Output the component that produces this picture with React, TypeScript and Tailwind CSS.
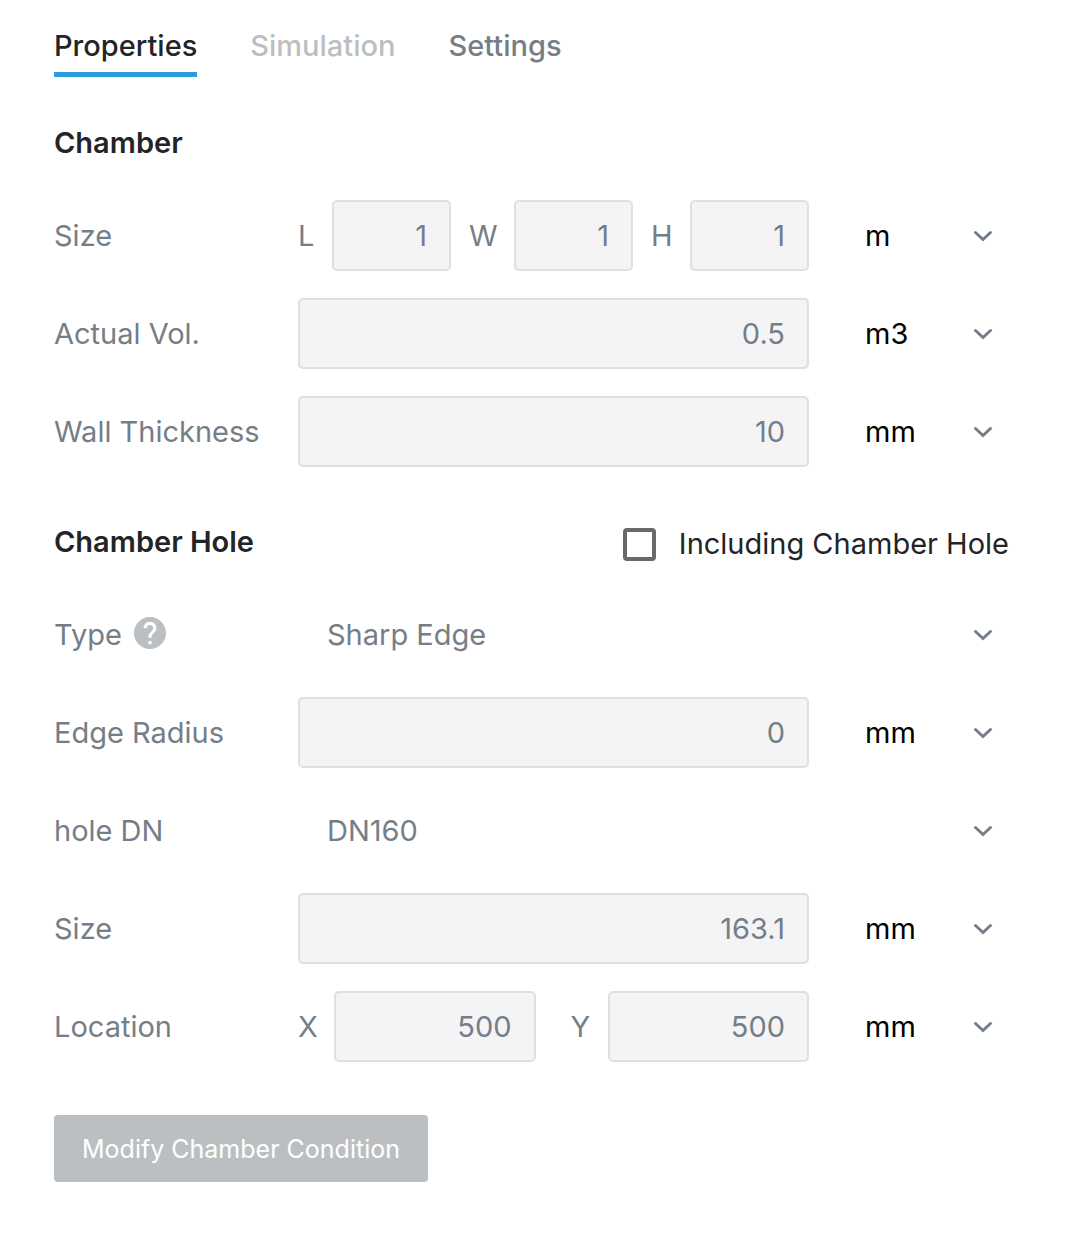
import type { ReactNode } from "react";

const muted = "text-[#757e87]";

function Chevron() {
  return (
    <svg
      className="pointer-events-none absolute right-4 top-1/2 -translate-y-1/2"
      width="20"
      height="12"
      viewBox="0 0 20 12"
      fill="none"
    >
      <path d="M2.5 2.5L10 9.5L17.5 2.5" stroke="#757e87" strokeWidth="3" strokeLinecap="round" />
    </svg>
  );
}

type SelectProps = { label: string; options: string[]; className: string };

function Select({ label, options, className }: SelectProps) {
  return (
    <div className="relative h-full">
      <select
        aria-label={label}
        className={`h-full w-full appearance-none bg-transparent outline-none ${className}`}
      >
        {options.map((option) => (
          <option key={option}>{option}</option>
        ))}
      </select>
      <Chevron />
    </div>
  );
}

function NumberBox({ id, label, value }: { id?: string; label?: string; value: string }) {
  return (
    <input
      id={id}
      aria-label={label}
      disabled
      defaultValue={value}
      className={`h-[71px] w-full min-w-0 rounded-[5px] border-2 border-[#dfdfe0] bg-[#f4f4f7] pr-[22px] text-right ${muted}`}
    />
  );
}

function Axis({ name, value, className = "" }: { name: string; value: string; className?: string }) {
  const id = `axis-${name}`;
  return (
    <>
      <label htmlFor={id} className={className}>
        {name}
      </label>
      <NumberBox id={id} value={value} />
    </>
  );
}

type RowProps = { label: ReactNode; unit: string; units: string[]; children: ReactNode };

function Row({ label, unit, units, children }: RowProps) {
  return (
    <div className={`grid h-[71px] grid-cols-[244px_1fr_200px] items-center ${muted}`}>
      <div>{label}</div>
      <div>{children}</div>
      <Select label={unit} options={units} className="pl-14 text-black" />
    </div>
  );
}

function SelectRow({ label, name, options }: { label: ReactNode; name: string; options: string[] }) {
  return (
    <div className={`grid h-[71px] grid-cols-[244px_1fr] items-center ${muted}`}>
      <div className="flex items-center gap-3">{label}</div>
      <Select label={name} options={options} className="pl-[29px]" />
    </div>
  );
}

function HelpIcon() {
  return (
    <svg className="mb-1" width="32" height="32" viewBox="2 2 20 20" fill="#bbbfc2">
      <path d="M12 2C6.48 2 2 6.48 2 12s4.48 10 10 10 10-4.48 10-10S17.52 2 12 2zm1 17h-2v-2h2v2zm2.07-7.75l-.9.92C13.45 12.9 13 13.5 13 15h-2v-.5c0-1.1.45-2.1 1.17-2.83l1.24-1.26c.37-.36.59-.86.59-1.41 0-1.1-.9-2-2-2s-2 .9-2 2H8c0-2.21 1.79-4 4-4s4 1.79 4 4c0 .88-.36 1.68-.93 2.25z" />
    </svg>
  );
}

export default function App() {
  return (
    <main className="bg-white pb-[53px] pl-[54px] pr-[58px] pt-6 font-['Inter',sans-serif] text-[29px] leading-[44px] text-[#222426]">
      <nav className="flex items-start gap-[53px] font-medium">
        <button className="border-b-[5px] border-[#2d9cdb] pb-1">Properties</button>
        <button disabled className="pb-1 text-[#bbbfc2]">
          Simulation
        </button>
        <button className={`pb-1 ${muted}`}>Settings</button>
      </nav>

      <section className="mt-11">
        <h2 className="font-semibold">Chamber</h2>
        <div className="mt-[35px] flex flex-col gap-[27px]">
          <Row label="Size" unit="Size unit" units={["m", "mm"]}>
            <div className="grid grid-cols-[34px_1fr_63px_1fr_57px_1fr] items-center">
              <Axis name="L" value="1" />
              <Axis name="W" value="1" className="pl-[18px]" />
              <Axis name="H" value="1" className="pl-[18px]" />
            </div>
          </Row>
          <Row label="Actual Vol." unit="Volume unit" units={["m3", "L"]}>
            <NumberBox label="Actual volume" value="0.5" />
          </Row>
          <Row label="Wall Thickness" unit="Thickness unit" units={["mm", "m"]}>
            <NumberBox label="Wall thickness" value="10" />
          </Row>
        </div>
      </section>

      <section className="mt-[51px]">
        <div className="flex items-center justify-between">
          <h2 className="font-semibold">Chamber Hole</h2>
          <label className="flex items-center gap-[23px] pt-1">
            <input
              type="checkbox"
              className="h-[33px] w-[33px] appearance-none rounded-sm border-4 border-[#696969] checked:bg-[#2d9cdb]"
            />
            Including Chamber Hole
          </label>
        </div>
        <div className="mt-[33px] flex flex-col gap-[27px]">
          <SelectRow
            name="Type"
            label={
              <>
                Type <HelpIcon />
              </>
            }
            options={["Sharp Edge", "Rounded Edge"]}
          />
          <Row label="Edge Radius" unit="Radius unit" units={["mm", "m"]}>
            <NumberBox label="Edge radius" value="0" />
          </Row>
          <SelectRow name="hole DN" label="hole DN" options={["DN160", "DN100"]} />
          <Row label="Size" unit="Hole size unit" units={["mm", "m"]}>
            <NumberBox label="Hole size" value="163.1" />
          </Row>
          <Row label="Location" unit="Location unit" units={["mm", "m"]}>
            <div className="grid grid-cols-[36px_1fr_72px_1fr] items-center">
              <Axis name="X" value="500" />
              <Axis name="Y" value="500" className="pl-[35px]" />
            </div>
          </Row>
        </div>
      </section>

      <button
        disabled
        className="mt-[53px] h-[67px] rounded-sm bg-[#bbbfc2] px-7 text-[25px] text-white"
      >
        Modify Chamber Condition
      </button>
    </main>
  );
}
